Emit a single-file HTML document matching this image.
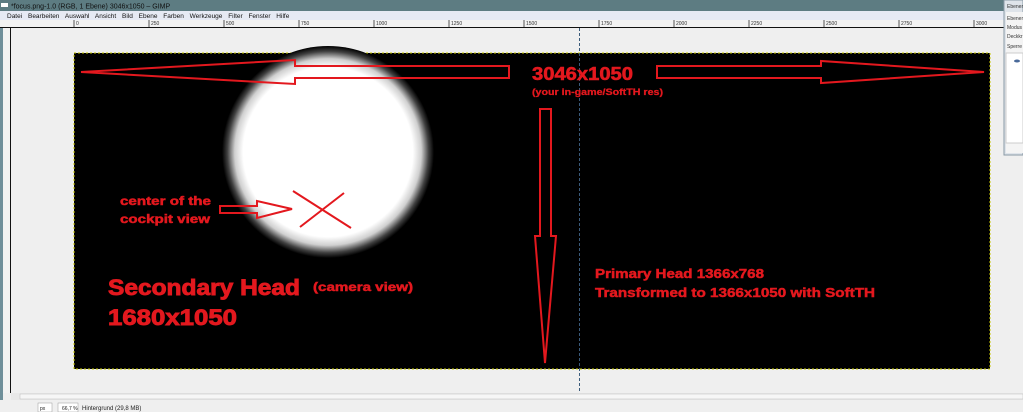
<!DOCTYPE html>
<html><head><meta charset="utf-8"><style>
html,body{margin:0;padding:0;width:1023px;height:412px;overflow:hidden;background:#efefef}
svg{display:block}
text{font-family:"Liberation Sans",sans-serif}
</style></head><body>
<svg width="1023" height="412" viewBox="0 0 1023 412" xmlns="http://www.w3.org/2000/svg">
<defs>
<radialGradient id="g" cx="0.5" cy="0.5" r="0.5">
<stop offset="0.8" stop-color="#ffffff"/>
<stop offset="0.88" stop-color="#d0d0d0"/>
<stop offset="0.95" stop-color="#404040"/>
<stop offset="1" stop-color="#000"/>
</radialGradient>
</defs>
<rect x="0" y="0" width="1023" height="11" fill="#5d7c82"/>
<rect x="1" y="3" width="7" height="4" fill="#fff"/>
<text x="11" y="8.5" font-size="7" fill="#111">*focus.png-1.0 (RGB, 1 Ebene) 3046x1050 – GIMP</text>
<rect x="0" y="11" width="1005" height="9" fill="#e6eaf4"/>
<text x="7" y="18" font-size="6.5" fill="#111" word-spacing="4">Datei Bearbeiten Auswahl Ansicht Bild Ebene Farben Werkzeuge Filter Fenster Hilfe</text>
<rect x="0" y="20" width="1005" height="8" fill="#f2f2f2"/>
<line x1="0" y1="27.5" x2="1005" y2="27.5" stroke="#111" stroke-width="1"/>
<g stroke="#555" stroke-width="1">
<path d="M74 20v7M149 20v7M224 20v7M299 20v7M374 20v7M449 20v7M524 20v7M599 20v7M674 20v7M749 20v7M824 20v7M899 20v7M974 20v7"/>
</g>
<g font-size="5" fill="#333">
<text x="76" y="25">0</text><text x="151" y="25">250</text><text x="226" y="25">500</text><text x="301" y="25">750</text><text x="376" y="25">1000</text><text x="451" y="25">1250</text><text x="526" y="25">1500</text><text x="601" y="25">1750</text><text x="676" y="25">2000</text><text x="751" y="25">2250</text><text x="826" y="25">2500</text><text x="901" y="25">2750</text><text x="976" y="25">3000</text>
</g>
<rect x="0" y="28" width="3" height="372" fill="#6f8f9a"/>
<rect x="3" y="28" width="8" height="365" fill="#f2f2f2"/>
<line x1="10.5" y1="28" x2="10.5" y2="393" stroke="#111"/>
<rect x="74" y="53" width="916" height="316" fill="#000" stroke="#c8c800" stroke-width="1" stroke-dasharray="2,2"/>
<circle cx="328" cy="152" r="106" fill="url(#g)"/>
<line x1="579.5" y1="28" x2="579.5" y2="400" stroke="#3a5a7a" stroke-width="1" stroke-dasharray="3,2"/>
<g fill="none" stroke="#e3181e" stroke-width="2" stroke-linejoin="miter">
<path d="M81 72 L295 60 L295 66 L509 66 L509 78 L295 78 L295 84 Z"/>
<path d="M657 66 L821 66 L821 61 L984 72 L821 83 L821 78 L657 78 Z"/>
<path d="M540 109 L551 109 L551 236 L556 236 L545 363 L535 236 L540 236 Z"/>
<path d="M220 206 L257 206 L257 201 L292 209 L257 218 L257 213 L220 213 Z"/>
<path d="M293 191 L351 228 M344 193 L300 227"/>
</g>
<g fill="#e3181e" stroke="#e3181e" font-weight="bold">
<text x="532" y="80" font-size="18" stroke-width="0.6" textLength="101" lengthAdjust="spacingAndGlyphs">3046x1050</text>
<text x="532" y="95" font-size="9" stroke-width="0.3" textLength="131" lengthAdjust="spacingAndGlyphs">(your in-game/SoftTH res)</text>
<text x="120" y="205" font-size="12" stroke-width="0.5" textLength="91" lengthAdjust="spacingAndGlyphs">center of the</text>
<text x="120" y="223" font-size="12" stroke-width="0.5" textLength="90" lengthAdjust="spacingAndGlyphs">cockpit view</text>
<text x="108" y="295" font-size="22" stroke-width="0.9" textLength="192" lengthAdjust="spacingAndGlyphs">Secondary Head</text>
<text x="313" y="291" font-size="12" stroke-width="0.5" textLength="100" lengthAdjust="spacingAndGlyphs">(camera view)</text>
<text x="108" y="325" font-size="22" stroke-width="0.9" textLength="129" lengthAdjust="spacingAndGlyphs">1680x1050</text>
<text x="595" y="278" font-size="13" stroke-width="0.5" textLength="169" lengthAdjust="spacingAndGlyphs">Primary Head 1366x768</text>
<text x="595" y="297" font-size="13" stroke-width="0.5" textLength="280" lengthAdjust="spacingAndGlyphs">Transformed to 1366x1050 with SoftTH</text>
</g>
<rect x="1004" y="0" width="19" height="155" fill="#dfe4ea" stroke="#8a9aa6"/>
<rect x="1006" y="12" width="17" height="141" fill="#f4f4f4"/>
<g font-size="5" fill="#333">
<text x="1007" y="8">Ebenen</text><text x="1007" y="20">Ebenen</text><text x="1007" y="29">Modus</text><text x="1007" y="38">Deckkr</text><text x="1007" y="48">Sperre</text>
</g>
<rect x="1006" y="53" width="17" height="90" fill="#fff" stroke="#ccc"/>
<ellipse cx="1017" cy="61" rx="3" ry="1.5" fill="#4a6a9a"/>
<rect x="11" y="393" width="1012" height="7" fill="#e8e8e8"/>
<rect x="20" y="394" width="1003" height="5" fill="#f6f6f6" stroke="#bbb" stroke-width="0.5"/>
<rect x="0" y="400" width="1023" height="12" fill="#efefef"/>
<rect x="38" y="403" width="14" height="9" fill="#fff" stroke="#999" stroke-width="0.5"/>
<rect x="58" y="403" width="20" height="9" fill="#fff" stroke="#999" stroke-width="0.5"/>
<text x="40" y="410" font-size="5" fill="#222">px</text>
<text x="62" y="410" font-size="5" fill="#222">66,7 %</text>
<text x="82" y="410" font-size="6" fill="#222">Hintergrund (29,8 MB)</text>
</svg>
</body></html>
